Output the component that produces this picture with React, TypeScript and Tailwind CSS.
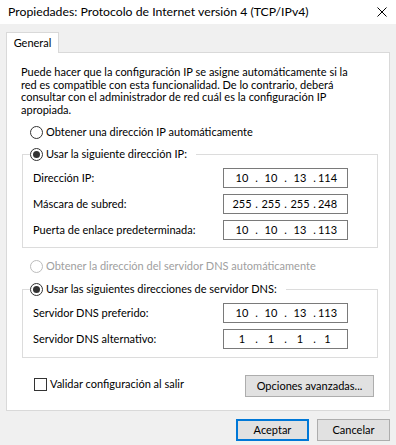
import React from 'react';

const font = "font-['Lato',sans-serif]";

const Radio: React.FC<{ checked?: boolean; disabled?: boolean; label: string }> = ({ checked, disabled, label }) => (
  <span className="flex items-center h-[14px]">
    <span
      className={`flex items-center justify-center w-[13px] h-[13px] rounded-full border bg-white ${
        disabled ? 'border-[#bcbcbc]' : 'border-[#333333]'
      }`}
    >
      {checked && <span className="w-[7px] h-[7px] rounded-full bg-[#333333]" />}
    </span>
    <span className={`ml-[3px] ${disabled ? 'text-[#a0a0a0]' : 'text-black'}`}>{label}</span>
  </span>
);

const IpField: React.FC<{ octets: string[] }> = ({ octets }) => (
  <div className="flex items-center w-[125px] h-[20px] border border-[#7a7a7a] bg-white pl-[6px]">
    {octets.map((o, i) => (
      <React.Fragment key={i}>
        <span className={`${i === 3 ? 'w-[21px]' : 'w-[24px]'} text-center`}>{o}</span>
        {i < 3 && <span className="w-[5px] text-center">.</span>}
      </React.Fragment>
    ))}
  </div>
);

const Row: React.FC<{ label: string; octets: string[]; first?: boolean }> = ({ label, octets, first }) => (
  <div className={`flex items-center justify-between pl-[10px] pr-[29px] ${first ? 'mt-[7px]' : 'mt-[6px]'}`}>
    <span>{label}</span>
    <IpField octets={octets} />
  </div>
);

const GroupBox: React.FC<{ legend: string; children: React.ReactNode; className?: string }> = ({
  legend,
  children,
  className,
}) => (
  <fieldset className={`ml-[15px] w-[356px] border border-[#dcdcdc] ${className ?? ''}`}>
    <legend className="ml-[7px] pr-[9px]">
      <Radio checked label={legend} />
    </legend>
    {children}
  </fieldset>
);

export default function App() {
  return (
    <div className={`w-[396px] h-[445px] bg-[#f0f0f0] flex flex-col text-[11px] leading-[14px] text-black ${font}`}>
      {/* title bar */}
      <div className="h-[24px] bg-white flex items-center justify-between pl-[8px] pr-[9px]">
        <span className="text-[12.25px]">Propiedades: Protocolo de Internet versión 4 (TCP/IPv4)</span>
        <svg width="10" height="10" viewBox="0 0 10 10" className="mt-[-1px]">
          <path d="M0.5 0.5 L9.5 9.5 M9.5 0.5 L0.5 9.5" stroke="#000" strokeWidth="1" />
        </svg>
      </div>

      <div className="flex flex-col pt-[8px] pl-[6px] pr-[6px]">
        {/* tab */}
        <div className="relative z-10 mb-[-1px] w-[53px] h-[21px] bg-white border-t border-l border-r border-[#d9d9d9] flex items-center justify-center">
          General
        </div>

        {/* panel */}
        <div className="bg-white border border-[#d9d9d9] flex flex-col pb-[13px]">
          <p className="mt-[13px] pl-[14px] leading-[12.5px]">
            <span className="block whitespace-nowrap">Puede hacer que la configuración IP se asigne automáticamente si la</span>
            <span className="block whitespace-nowrap">red es compatible con esta funcionalidad. De lo contrario, deberá</span>
            <span className="block whitespace-nowrap">consultar con el administrador de red cuál es la configuración IP</span>
            <span className="block whitespace-nowrap">apropiada.</span>
          </p>

          <div className="mt-[9px] pl-[23px]">
            <Radio label="Obtener una dirección IP automáticamente" />
          </div>

          <GroupBox legend="Usar la siguiente dirección IP:" className="mt-[8px] pb-[7px]">
            <Row first label="Dirección IP:" octets={['10', '10', '13', '114']} />
            <Row label="Máscara de subred:" octets={['255', '255', '255', '248']} />
            <Row label="Puerta de enlace predeterminada:" octets={['10', '10', '13', '113']} />
          </GroupBox>

          <div className="mt-[11px] pl-[23px]">
            <Radio disabled label="Obtener la dirección del servidor DNS automáticamente" />
          </div>

          <GroupBox legend="Usar las siguientes direcciones de servidor DNS:" className="mt-[9px] pb-[8px]">
            <Row first label="Servidor DNS preferido:" octets={['10', '10', '13', '113']} />
            <Row label="Servidor DNS alternativo:" octets={['1', '1', '1', '1']} />
          </GroupBox>

          <div className="mt-[17px] flex items-start justify-between pl-[27px] pr-[15px]">
            <label className="flex items-center h-[14px] mt-[2px]">
              <span className="w-[13px] h-[13px] border border-[#333333] bg-white" />
              <span className="ml-[3px]">Validar configuración al salir</span>
            </label>
            <button className="w-[129px] h-[22px] bg-[#e1e1e1] border border-[#adadad] flex items-center justify-center">
              Opciones avanzadas...
            </button>
          </div>
        </div>

        {/* dialog buttons */}
        <div className="mt-[8px] flex justify-end gap-[8px] pr-[-1px]">
          <button className="w-[73px] h-[22px] bg-[#e1e1e1] border-2 border-[#0078d7] flex items-center justify-center">
            Aceptar
          </button>
          <button className="w-[73px] h-[22px] bg-[#e1e1e1] border border-[#adadad] flex items-center justify-center">
            Cancelar
          </button>
        </div>
      </div>
    </div>
  );
}
